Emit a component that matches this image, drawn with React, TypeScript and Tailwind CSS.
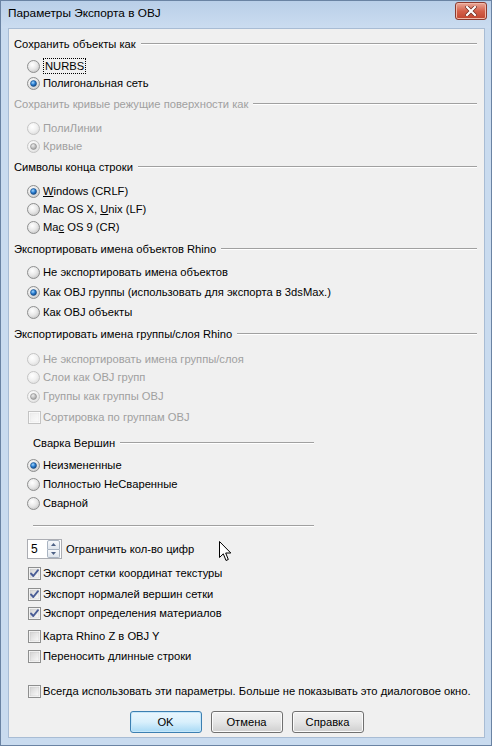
import React from "react";

function Radio({ checked = false, disabled = false }: { checked?: boolean; disabled?: boolean }) {
  const ring = disabled ? "#c4c4c4" : "#8e8f8f";
  return (
    <svg width="13" height="13" viewBox="0 0 13 13" className="shrink-0">
      <defs>
        <radialGradient id={disabled ? "rgd" : "rgn"} cx="0.4" cy="0.35" r="0.7">
          <stop offset="0" stopColor="#ffffff" />
          <stop offset="0.55" stopColor={disabled ? "#f1f1f1" : "#e8e8e8"} />
          <stop offset="1" stopColor={disabled ? "#dcdcdc" : "#c6c6c6"} />
        </radialGradient>
        <radialGradient id="dotn" cx="0.4" cy="0.35" r="0.7">
          <stop offset="0" stopColor="#a6d8ff" />
          <stop offset="0.5" stopColor="#2a7fd2" />
          <stop offset="1" stopColor="#103f7a" />
        </radialGradient>
        <radialGradient id="dotd" cx="0.4" cy="0.35" r="0.7">
          <stop offset="0" stopColor="#ececec" />
          <stop offset="1" stopColor="#9a9a9a" />
        </radialGradient>
      </defs>
      <circle cx="6.5" cy="6.5" r="6" fill={`url(#${disabled ? "rgd" : "rgn"})`} stroke={ring} strokeWidth="1" />
      {checked && (
        <circle cx="6.5" cy="6.5" r="3" fill={`url(#${disabled ? "dotd" : "dotn"})`} stroke={disabled ? "#8a8a8a" : "#1b4f86"} strokeWidth="0.6" />
      )}
    </svg>
  );
}

function Check({ checked = false, disabled = false }: { checked?: boolean; disabled?: boolean }) {
  return (
    <svg width="13" height="13" viewBox="0 0 13 13" className="shrink-0">
      <defs>
        <linearGradient id={disabled ? "cgd" : "cgn"} x1="0" y1="0" x2="1" y2="1">
          <stop offset="0" stopColor={disabled ? "#ececec" : "#d3d3d3"} />
          <stop offset="1" stopColor="#fbfbfb" />
        </linearGradient>
      </defs>
      <rect x="0.5" y="0.5" width="12" height="12" fill="#ffffff" stroke={disabled ? "#c3c3c3" : "#8e8f8f"} />
      <rect x="2" y="2" width="9" height="9" fill={`url(#${disabled ? "cgd" : "cgn"})`} stroke={disabled ? "#e2e2e2" : "#c4c4c4"} strokeWidth="0.5" />
      {checked && (
        <path d="M3 6.5 L5.3 9 L10 3.2" fill="none" stroke="#4a5d96" strokeWidth="1.9" strokeLinecap="round" strokeLinejoin="round" />
      )}
    </svg>
  );
}

function Header({ text, disabled = false }: { text: string; disabled?: boolean }) {
  return (
    <div className="flex items-center h-[16px] pl-[5px] pr-[7px]">
      <span className={disabled ? "text-[#a0a0a0] whitespace-nowrap" : "whitespace-nowrap"}>{text}</span>
      <div className="flex-1 ml-[5px] h-[2px] border-t border-t-[#a0a0a0] border-b border-b-[#ffffff]" />
    </div>
  );
}

function RadioRow({
  children,
  checked,
  disabled,
  mt,
}: {
  children: React.ReactNode;
  checked?: boolean;
  disabled?: boolean;
  mt: string;
}) {
  return (
    <div className={`flex items-center h-[16px] pl-[18px] ${mt}`}>
      <Radio checked={checked} disabled={disabled} />
      <span className={`ml-[3px] whitespace-nowrap ${disabled ? "text-[#a0a0a0]" : ""}`}>{children}</span>
    </div>
  );
}

function CheckRow({
  children,
  checked,
  disabled,
  mt,
}: {
  children: React.ReactNode;
  checked?: boolean;
  disabled?: boolean;
  mt: string;
}) {
  return (
    <div className={`flex items-center h-[16px] pl-[19px] ${mt}`}>
      <Check checked={checked} disabled={disabled} />
      <span className={`ml-[2px] whitespace-nowrap ${disabled ? "text-[#a0a0a0]" : ""}`}>{children}</span>
    </div>
  );
}

function Btn({ children, def = false }: { children: React.ReactNode; def?: boolean }) {
  return (
    <div
      className={`w-[72px] h-[22px] rounded-[3px] border flex items-center justify-center ${
        def
          ? "border-[#3c7fb1] bg-linear-to-b from-[#eaf6fd] via-[#d9f0fc] to-[#a7d9f5] shadow-[inset_0_0_0_1px_#c5e7fa]"
          : "border-[#707070] bg-linear-to-b from-[#f2f2f2] via-[#e6e6e6] to-[#cfcfcf] shadow-[inset_0_0_0_1px_#fbfbfb]"
      }`}
    >
      {children}
    </div>
  );
}

export default function App() {
  return (
    <div className="w-[492px] h-[746px] relative bg-[#c9dbef] border border-[#6a83a3] font-['Liberation_Sans',Arial,sans-serif] text-[11.2px] text-black flex flex-col overflow-hidden">
      {/* title bar */}
      <div className="h-[27px] shrink-0 flex items-start bg-linear-to-b from-[#b9cfe8] to-[#cbdcf0] relative">
        <span className="ml-[7px] mt-[4px] text-[11.8px] text-black">Параметры Экспорта в OBJ</span>
        <div className="absolute right-[4px] top-[1px] w-[32px] h-[18px] rounded-[3px] border border-[#8c3a2e] bg-linear-to-b from-[#e9a99a] via-[#d4604a] to-[#c0452e] flex items-center justify-center shadow-[inset_0_0_0_1px_#f0b8a8]">
          <svg width="12" height="10" viewBox="0 0 12 10">
            <path d="M2 1 L10 9 M10 1 L2 9" stroke="#6b2a20" strokeWidth="3.6" strokeLinecap="square" />
            <path d="M2 1 L10 9 M10 1 L2 9" stroke="#ffffff" strokeWidth="2.2" strokeLinecap="square" />
          </svg>
        </div>
      </div>

      {/* client area */}
      <div className="relative ml-[7px] mr-[6px] mb-[7px] flex-1 bg-[#f0f0f0] border border-[#a8bcd4] flex flex-col pt-[7px]">
        <Header text="Сохранить объекты как" />
        <div className="flex items-center h-[16px] pl-[18px] mt-[6px]">
          <Radio />
          <span className="ml-[3px] px-[1px] border border-dotted border-black leading-[14px]">NURBS</span>
        </div>
        <RadioRow checked mt="mt-[1px]">Полигональная сеть</RadioRow>

        <div className="mt-[5px]">
          <Header text="Сохранить кривые режущие поверхности как" disabled />
        </div>
        <RadioRow disabled mt="mt-[8px]">ПолиЛинии</RadioRow>
        <RadioRow disabled checked mt="mt-[2px]">Кривые</RadioRow>

        <div className="mt-[5px]">
          <Header text="Символы конца строки" />
        </div>
        <RadioRow checked mt="mt-[8px]">
          <u>W</u>indows (CRLF)
        </RadioRow>
        <RadioRow mt="mt-[2px]">
          Mac OS X, <u>U</u>nix (LF)
        </RadioRow>
        <RadioRow mt="mt-[2px]">
          Ma<u>c</u> OS 9 (CR)
        </RadioRow>

        <div className="mt-[6px]">
          <Header text="Экспортировать имена объектов Rhino" />
        </div>
        <RadioRow mt="mt-[7px]">Не экспортировать имена объектов</RadioRow>
        <RadioRow checked mt="mt-[4px]">Как OBJ группы (использовать для экспорта в 3dsMax.)</RadioRow>
        <RadioRow mt="mt-[4px]">Как OBJ объекты</RadioRow>

        <div className="mt-[6px]">
          <Header text="Экспортировать имена группы/слоя Rhino" />
        </div>
        <RadioRow disabled mt="mt-[9px]">Не экспортировать имена группы/слоя</RadioRow>
        <RadioRow disabled mt="mt-[2px]">Слои как OBJ групп</RadioRow>
        <RadioRow disabled checked mt="mt-[3px]">Группы как группы OBJ</RadioRow>
        <CheckRow disabled mt="mt-[5px]">Сортировка по группам OBJ</CheckRow>

        <div className="mt-[10px] flex items-center h-[16px] pl-[24px] w-[305px]">
          <span className="whitespace-nowrap">Сварка Вершин</span>
          <div className="flex-1 ml-[5px] h-[2px] border-t border-t-[#a0a0a0] border-b border-b-[#ffffff]" />
        </div>
        <RadioRow checked mt="mt-[6px]">Неизмененные</RadioRow>
        <RadioRow mt="mt-[3px]">Полностью НеСваренные</RadioRow>
        <RadioRow mt="mt-[3px]">Сварной</RadioRow>
        <div className="mt-[14px] ml-[24px] w-[281px] h-[2px] border-t border-t-[#a0a0a0] border-b border-b-[#ffffff]" />

        {/* spinner */}
        <div className="mt-[12px] flex items-center h-[20px] pl-[18px]">
          <div className="w-[35px] h-[20px] border border-[#abadb3] bg-white flex items-center justify-between">
            <span className="ml-[3px] text-[12px]">5</span>
            <div className="w-[13px] h-[18px] mr-[1px] flex flex-col">
              <div className="flex-1 border border-[#a9b4c2] rounded-t-[2px] bg-linear-to-b from-[#f6f8fb] to-[#dfe5ec] flex items-center justify-center">
                <svg width="5" height="3" viewBox="0 0 5 3">
                  <path d="M0 3 L2.5 0 L5 3 Z" fill="#4d6185" />
                </svg>
              </div>
              <div className="flex-1 border border-t-0 border-[#a9b4c2] rounded-b-[2px] bg-linear-to-b from-[#f6f8fb] to-[#dfe5ec] flex items-center justify-center">
                <svg width="5" height="3" viewBox="0 0 5 3">
                  <path d="M0 0 L2.5 3 L5 0 Z" fill="#4d6185" />
                </svg>
              </div>
            </div>
          </div>
          <span className="ml-[4px] whitespace-nowrap">Ограничить кол-во цифр</span>
        </div>

        <CheckRow checked mt="mt-[6px]">Экспорт сетки координат текстуры</CheckRow>
        <CheckRow checked mt="mt-[5px]">Экспорт нормалей вершин сетки</CheckRow>
        <CheckRow checked mt="mt-[3px]">Экспорт определения материалов</CheckRow>
        <CheckRow mt="mt-[7px]">Карта Rhino Z в OBJ Y</CheckRow>
        <CheckRow mt="mt-[4px]">Переносить длинные строки</CheckRow>

        <CheckRow mt="mt-[19px]">Всегда использовать эти параметры. Больше не показывать это диалоговое окно.</CheckRow>

        <div className="mt-[12px] flex justify-center gap-[9px]">
          <Btn def>OK</Btn>
          <Btn>Отмена</Btn>
          <Btn>Справка</Btn>
        </div>

        {/* mouse cursor */}
        <svg className="absolute left-[210px] top-[512px]" width="13" height="21" viewBox="0 0 13 21">
          <path
            d="M0.5 0.5 L0.5 16.5 L4.3 12.8 L7 19.5 L9.3 18.5 L6.7 12 L11.8 12 Z"
            fill="#ffffff"
            stroke="#000000"
            strokeWidth="1"
            strokeLinejoin="round"
          />
        </svg>
      </div>
    </div>
  );
}
